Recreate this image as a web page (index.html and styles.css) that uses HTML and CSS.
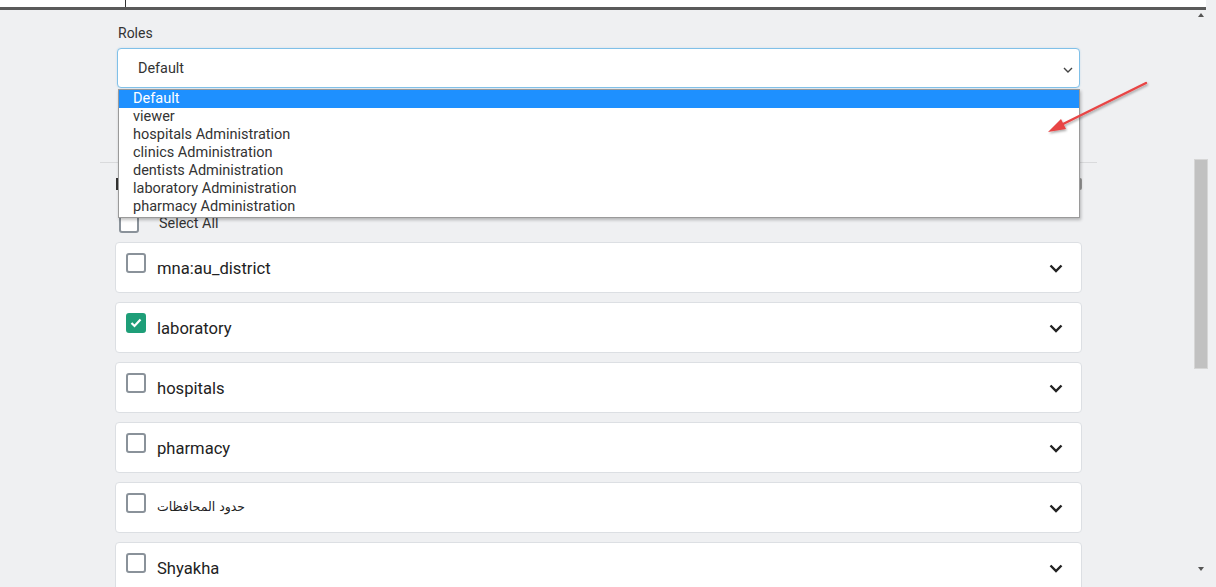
FILE: index.html
```html
<!DOCTYPE html>
<html>
<head>
<meta charset="utf-8">
<link rel="stylesheet" href="styles.css">
</head>
<body>
<div class="topbar"><span class="tick"></span></div>
<div class="layout">
  <main class="page">
    <label class="field-label">Roles</label>
    <div class="select-wrap">
      <div class="select">
        <span>Default</span>
        <svg class="sel-chev" width="10" height="6" viewBox="0 0 10 6"><path d="M1 1l4 4 4-4" fill="none" stroke="#444" stroke-width="1.4"/></svg>
      </div>
      <ul class="options">
        <li class="active">Default</li>
        <li>viewer</li>
        <li>hospitals Administration</li>
        <li>clinics Administration</li>
        <li>dentists Administration</li>
        <li>laboratory Administration</li>
        <li>pharmacy Administration</li>
      </ul>
    </div>
    <hr class="divider">
    <div class="layers-head">
      <span class="layers-mark"></span>
      <span class="layers-icon"></span>
    </div>
    <div class="select-all">
      <span class="cb"></span>
      <span>Select All</span>
    </div>
    <div class="cards">
      <div class="card"><span class="cb"></span><span class="name">mna:au_district</span><svg class="chev" width="14" height="9" viewBox="0 0 14 9"><path d="M1.5 1.5l5.5 5.5 5.5-5.5" fill="none" stroke="#222" stroke-width="2.4"/></svg></div>
      <div class="card"><span class="cb checked"><svg width="12" height="10" viewBox="0 0 12 10"><path d="M1.5 5l3 3 6-6.5" fill="none" stroke="#fff" stroke-width="2.2"/></svg></span><span class="name">laboratory</span><svg class="chev" width="14" height="9" viewBox="0 0 14 9"><path d="M1.5 1.5l5.5 5.5 5.5-5.5" fill="none" stroke="#222" stroke-width="2.4"/></svg></div>
      <div class="card"><span class="cb"></span><span class="name">hospitals</span><svg class="chev" width="14" height="9" viewBox="0 0 14 9"><path d="M1.5 1.5l5.5 5.5 5.5-5.5" fill="none" stroke="#222" stroke-width="2.4"/></svg></div>
      <div class="card"><span class="cb"></span><span class="name">pharmacy</span><svg class="chev" width="14" height="9" viewBox="0 0 14 9"><path d="M1.5 1.5l5.5 5.5 5.5-5.5" fill="none" stroke="#222" stroke-width="2.4"/></svg></div>
      <div class="card"><span class="cb"></span><span class="name arabic">حدود المحافظات</span><svg class="chev" width="14" height="9" viewBox="0 0 14 9"><path d="M1.5 1.5l5.5 5.5 5.5-5.5" fill="none" stroke="#222" stroke-width="2.4"/></svg></div>
      <div class="card"><span class="cb"></span><span class="name">Shyakha</span><svg class="chev" width="14" height="9" viewBox="0 0 14 9"><path d="M1.5 1.5l5.5 5.5 5.5-5.5" fill="none" stroke="#222" stroke-width="2.4"/></svg></div>
    </div>
  </main>
  <aside class="scrollbar">
    <span class="arrow-up"></span>
    <span class="thumb"></span>
    <span class="arrow-down"></span>
  </aside>
</div>
<svg class="annot" width="1216" height="587" viewBox="0 0 1216 587">
  <defs>
    <filter id="sh" x="-20%" y="-20%" width="140%" height="140%"><feDropShadow dx="1" dy="1.5" stdDeviation="1" flood-color="#000" flood-opacity="0.35"/></filter>
  </defs>
  <g filter="url(#sh)">
    <line x1="1146" y1="83" x2="1057" y2="127" stroke="#e84545" stroke-width="2.4" stroke-linecap="round"/>
    <path d="M1048 132 L1061 119 L1066 129 Z" fill="#e84545"/>
  </g>
</svg>
</body>
</html>
```
FILE: styles.css
```css
* { box-sizing: border-box; }
html, body { margin: 0; padding: 0; height: 100%; overflow: hidden; }
body {
  background: #eff0f2;
  font-family: Roboto, "Noto Sans", "Liberation Sans", sans-serif;
  color: #212529;
  position: relative;
}
.topbar {
  height: 10px;
  background: #fff;
  border-bottom: 3px solid #5a5a5a;
  margin-right: 10px;
  position: relative;
}
.tick {
  position: absolute;
  left: 125px;
  top: 0;
  width: 1px;
  height: 7px;
  background: #333;
}
.layout {
  display: flex;
  height: calc(100% - 10px);
}
.page {
  flex: 1;
  padding-left: 115px;
  padding-right: 110px;
  padding-top: 13px;
  display: flex;
  flex-direction: column;
}
.page > * { flex-shrink: 0; }
.field-label {
  font-size: 14px;
  line-height: 20px;
  color: #333;
  padding-left: 3px;
  margin-bottom: 5px;
}
.select-wrap {
  position: relative;
  margin-left: 2px;
  margin-right: 2px;
}
.select {
  height: 40px;
  background: #fff;
  border: 1px solid #80c0e8;
  border-radius: 4px;
  display: flex;
  align-items: center;
  justify-content: space-between;
  padding: 1px 6px 0 20px;
  font-size: 14.4px;
  color: #333;
  box-shadow: 0 0 2px rgba(100, 170, 220, 0.3);
}
.sel-chev { margin-top: 2px; }
.options {
  position: absolute;
  left: 1px;
  right: 0;
  top: 41px;
  margin: 0;
  padding: 0 0 1px;
  list-style: none;
  background: #fff;
  border: 1px solid #9a9a9a;
  box-shadow: 1px 2px 3px rgba(0, 0, 0, 0.25);
  z-index: 5;
}
.options li {
  font-size: 14.5px;
  line-height: 18px;
  height: 18px;
  padding-left: 14px;
  color: #333;
}
.options li.active {
  background: #1e90ff;
  color: #fff;
}
.divider {
  border: 0;
  border-top: 1px solid #d9dadc;
  margin: 74px -15px 0 -15px;
}
.layers-head {
  display: flex;
  justify-content: space-between;
  align-items: center;
  height: 24px;
  margin-top: 9px;
  padding-left: 1px;
}
.layers-mark { width: 4px; height: 12px; background: #333; }
.layers-icon { width: 6px; height: 12px; background: #999; border-radius: 2px; }
.select-all {
  display: flex;
  align-items: center;
  gap: 20px;
  margin-top: 17px;
  padding-left: 4px;
  font-size: 14.4px;
  color: #333;
  height: 20px;
}
.cb {
  width: 20px;
  height: 20px;
  border: 2px solid #8a929a;
  border-radius: 3px;
  background: #fff;
  flex: none;
  display: inline-flex;
  align-items: center;
  justify-content: center;
}
.cb.checked {
  background: #1e9e78;
  border-color: #1e9e78;
}
.cards {
  display: flex;
  flex-direction: column;
  gap: 9px;
  margin-top: 9px;
}
.card {
  height: 51px;
  background: #fff;
  border: 1px solid #dcdfe3;
  border-radius: 4px;
  display: flex;
  align-items: flex-start;
  padding: 10px 18px 0 10px;
  flex: none;
}
.card .name {
  flex: 1;
  font-size: 16.6px;
  line-height: 20px;
  margin-left: 11px;
  margin-top: 6px;
  color: #222;
}
.card .name.arabic {
  font-family: "DejaVu Sans", "Noto Sans", sans-serif;
  font-size: 12.5px;
  margin-top: 4px;
}
.card .chev { margin-top: 11px; }
.scrollbar {
  width: 17px;
  margin-right: 7px;
  position: relative;
  display: flex;
  flex-direction: column;
  align-items: center;
}
.arrow-up {
  margin-top: 3px;
  width: 0; height: 0;
  border-left: 3px solid transparent;
  border-right: 3px solid transparent;
  border-bottom: 4px solid #555;
}
.thumb {
  margin-top: 142px;
  width: 14px;
  height: 210px;
  background: #c1c1c1;
  border: 1px solid #d6d6d6;
}
.arrow-down {
  margin-top: auto;
  margin-bottom: 16px;
  width: 0; height: 0;
  border-left: 3px solid transparent;
  border-right: 3px solid transparent;
  border-top: 4px solid #555;
}
.annot {
  position: absolute;
  left: 0;
  top: 0;
  pointer-events: none;
  z-index: 10;
}
```
